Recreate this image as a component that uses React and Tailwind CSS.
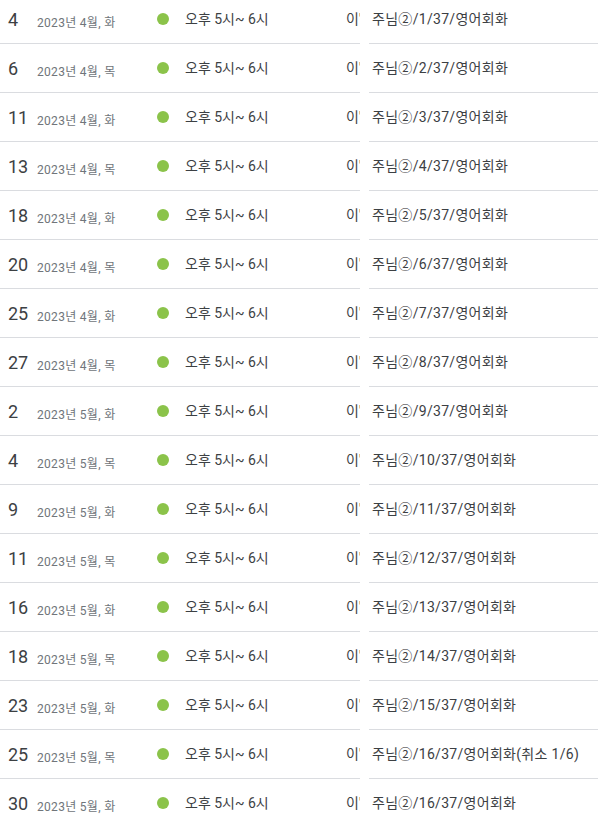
const rows = [
  ["4", "4월", "화", "주님②/1/37/영어회화"],
  ["6", "4월", "목", "주님②/2/37/영어회화"],
  ["11", "4월", "화", "주님②/3/37/영어회화"],
  ["13", "4월", "목", "주님②/4/37/영어회화"],
  ["18", "4월", "화", "주님②/5/37/영어회화"],
  ["20", "4월", "목", "주님②/6/37/영어회화"],
  ["25", "4월", "화", "주님②/7/37/영어회화"],
  ["27", "4월", "목", "주님②/8/37/영어회화"],
  ["2", "5월", "화", "주님②/9/37/영어회화"],
  ["4", "5월", "목", "주님②/10/37/영어회화"],
  ["9", "5월", "화", "주님②/11/37/영어회화"],
  ["11", "5월", "목", "주님②/12/37/영어회화"],
  ["16", "5월", "화", "주님②/13/37/영어회화"],
  ["18", "5월", "목", "주님②/14/37/영어회화"],
  ["23", "5월", "화", "주님②/15/37/영어회화"],
  ["25", "5월", "목", "주님②/16/37/영어회화(취소 1/6)"],
  ["30", "5월", "화", "주님②/16/37/영어회화"],
];

export default function App() {
  return (
    <div
      className="w-[598px] h-[825px] overflow-hidden bg-white"
      style={{ fontFamily: 'Roboto, "Noto Sans CJK KR", sans-serif' }}
    >
      <div className="-mt-[5px]">
        {rows.map((r, i) => (
          <div key={i} className="flex h-[49px]">
            <div className="flex w-[360px] shrink-0 items-center border-b border-[#dadce0]">
              <div className="w-[37px] pl-[8px] text-[18px] text-[#3c4043]">{r[0]}</div>
              <div className="w-[120px] pt-[8px] text-[12px] tracking-[0.3px] text-[#70757a]">
                2023년 {r[1]}, {r[2]}
              </div>
              <div className="w-[28px]">
                <div className="h-[12px] w-[12px] rounded-full bg-[#8bc34a]" />
              </div>
              <div className="w-[161px] text-[14px] text-[#3c4043]">오후 5시~ 6시</div>
              <div className="w-[14px] overflow-hidden whitespace-nowrap text-[14px] text-[#3c4043]">이'</div>
            </div>
            <div className="w-[9px] shrink-0" />
            <div className="flex flex-1 items-center border-b border-[#dadce0] pl-[3px] text-[14px] tracking-[0.3px] text-[#3c4043] whitespace-nowrap">
              {r[3]}
            </div>
          </div>
        ))}
      </div>
    </div>
  );
}
